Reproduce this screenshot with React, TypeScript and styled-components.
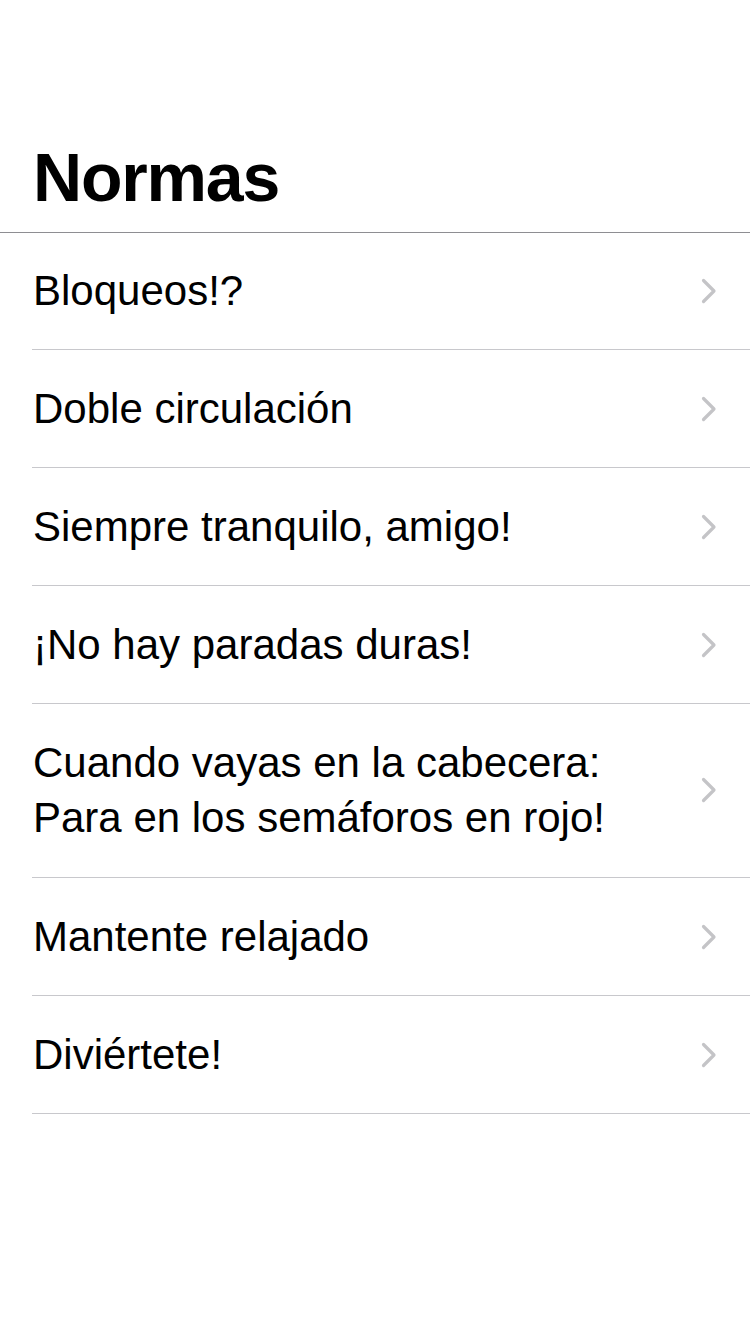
import React from "react";
import styled, { createGlobalStyle } from "styled-components";

const Global = createGlobalStyle`
  html, body { margin: 0; padding: 0; background: #fff; }
  body { font-family: "Liberation Sans", Arial, sans-serif; color: #000; }
`;

const Page = styled.div`
  width: 750px;
  min-height: 1334px;
  background: #fff;
`;

const Header = styled.header`
  padding: 143px 0 21px 33px;
  border-bottom: 1px solid #8e8e92;
`;

const Title = styled.h1`
  margin: 0;
  font-size: 68px;
  line-height: 68px;
  font-weight: 700;
  letter-spacing: -1.2px;
`;

const List = styled.ul`
  list-style: none;
  margin: -1px 0 0;
  padding: 0 0 0 32px;
`;

const Row = styled.li<{ $multi?: boolean }>`
  display: flex;
  align-items: center;
  justify-content: space-between;
  padding: 31px 33px ${(p) => (p.$multi ? "32px" : "31px")} 1px;
  border-bottom: 1px solid #c8c8cc;
`;

const Label = styled.span`
  font-size: 42px;
  line-height: 55px;
  white-space: pre-line;
`;

const Chevron = () => (
  <svg width="16" height="26" viewBox="0 0 16 26" fill="none">
    <path d="M2.5 2.5 L13 13 L2.5 23.5" stroke="#c4c4c7" strokeWidth="3.2" strokeLinecap="round" strokeLinejoin="round" />
  </svg>
);

const items = [
  "Bloqueos!?",
  "Doble circulación",
  "Siempre tranquilo, amigo!",
  "¡No hay paradas duras!",
  "Cuando vayas en la cabecera:\nPara en los semáforos en rojo!",
  "Mantente relajado",
  "Diviértete!",
];

export default function App() {
  return (
    <Page>
      <Global />
      <Header>
        <Title>Normas</Title>
      </Header>
      <List>
        {items.map((t) => (
          <Row key={t} $multi={t.includes("\n")}>
            <Label>{t}</Label>
            <Chevron />
          </Row>
        ))}
      </List>
    </Page>
  );
}
